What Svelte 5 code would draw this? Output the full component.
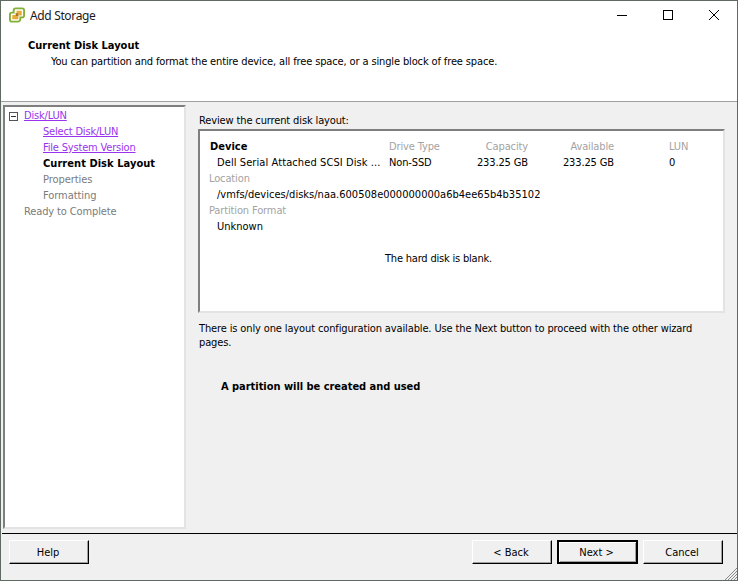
<script>
  const steps = [
    { label: 'Select Disk/LUN', kind: 'link' },
    { label: 'File System Version', kind: 'link' },
    { label: 'Current Disk Layout', kind: 'current' },
    { label: 'Properties', kind: 'off' },
    { label: 'Formatting', kind: 'off' }
  ]
</script>

<div class="window">
  <header class="head">
    <div class="titlebar">
      <svg class="logo" width="16" height="16" viewBox="0 0 17 17">
        <path d="M7 1.500h7a2 2 0 0 1 2 2V9a2 2 0 0 1-2 2h-2v2a2.500 2.500 0 0 1-2.500 2.500H3a2 2 0 0 1-2-2V8a2 2 0 0 1 2-2h2V3.500a2 2 0 0 1 2-2z" fill="#fff" stroke="#84b135" stroke-width="2" />
        <path d="M8 4h5.500v5H10V6.500H8z" fill="#eaa92f" />
        <path d="M3.500 8.500H7V10h3v3H3.500z" fill="#eaa92f" />
        <path d="M7 6.500h3V10H7z" fill="#a8761c" />
      </svg>
      <span class="title">Add Storage</span>
      <div class="controls">
        <svg width="46" height="30" viewBox="0 0 46 30"><path d="M18 14.500h10" stroke="#000" /></svg>
        <svg width="46" height="30" viewBox="0 0 46 30"><rect x="18.500" y="9.500" width="9" height="9" fill="none" stroke="#000" /></svg>
        <svg width="46" height="30" viewBox="0 0 46 30"><path d="M18 9l10 10M28 9L18 19" stroke="#000" fill="none" /></svg>
      </div>
    </div>
    <h1>Current Disk Layout</h1>
    <p class="sub">You can partition and format the entire device, all free space, or a single block of free space.</p>
  </header>

  <div class="main">
    <nav class="steps">
      <div class="root">
        <span class="toggle"></span>
        <span class="link">Disk/LUN</span>
      </div>
      {#each steps as step}
        <div class="step {step.kind}">{step.label}</div>
      {/each}
      <div class="ready">Ready to Complete</div>
    </nav>

    <section class="content">
      <div class="review">Review the current disk layout:</div>
      <div class="layout">
        <div class="cols">
          <span class="device">Device</span>
          <span class="muted type">Drive Type</span>
          <span class="muted num">Capacity</span>
          <span class="muted num">Available</span>
          <span class="muted lun">LUN</span>
        </div>
        <div class="cols">
          <span class="val dell">Dell Serial Attached SCSI Disk ...</span>
          <span class="type">Non-SSD</span>
          <span class="num">233.25 GB</span>
          <span class="num">233.25 GB</span>
          <span class="lun">0</span>
        </div>
        <div class="muted row">Location</div>
        <div class="val path">/vmfs/devices/disks/naa.600508e000000000a6b4ee65b4b35102</div>
        <div class="muted row">Partition Format</div>
        <div class="val">Unknown</div>
        <div class="blank">The hard disk is blank.</div>
      </div>
      <p class="note">There is only one layout configuration available. Use the Next button to proceed with the other wizard pages.</p>
      <p class="created">A partition will be created and used</p>
    </section>
  </div>

  <footer class="foot">
    <button class="btn">Help</button>
    <div class="right">
      <button class="btn">&lt; Back</button>
      <button class="btn default">Next &gt;</button>
      <button class="btn">Cancel</button>
    </div>
  </footer>

  <svg class="grip" width="14" height="14" viewBox="0 0 14 14">
    <path d="M14 2L2 14M14 5L5 14M14 8L8 14M14 11L11 14" stroke="#8a8a8a" fill="none" />
  </svg>
</div>

<style>
  :global(body) {
    margin: 0;
    background: #f0f0f0;
  }

  .window {
    position: relative;
    box-sizing: border-box;
    width: 738px;
    height: 581px;
    display: flex;
    flex-direction: column;
    background: #f0f0f0;
    border: 1px solid #5f6b62;
    font: 11px/16px "DejaVu Sans Condensed", Tahoma, sans-serif;
    letter-spacing: -0.13px;
    color: #000;
    overflow: hidden;
  }

  .head {
    height: 100px;
    flex: none;
    background: #fff;
    border-bottom: 1px solid #a0a0a0;
  }

  .titlebar {
    display: flex;
    align-items: center;
    height: 30px;
    padding-left: 8px;
  }

  .logo {
    margin: 0 5px 2px 0;
  }

  .title {
    margin-bottom: 2px;
    font: 12px "Noto Sans", sans-serif;
    letter-spacing: -0.35px;
    color: #1a1a1a;
  }

  .controls {
    margin-left: auto;
    display: flex;
  }

  .controls svg {
    display: block;
  }

  h1 {
    margin: 7px 0 0 27px;
    font: bold 11px/16px "DejaVu Sans Condensed", Tahoma, sans-serif;
    letter-spacing: 0;
  }

  .sub {
    margin: 0 0 0 50px;
  }

  .main {
    flex: 1;
    display: flex;
    min-height: 0;
    padding: 3px 12px 4px 2px;
    gap: 12px;
  }

  .steps {
    box-sizing: border-box;
    width: 183px;
    flex: none;
    background: #fff;
    border: 2px solid;
    border-color: #7f7f7f #e3e3e3 #e3e3e3 #7f7f7f;
    padding: 1px 0 0 4px;
  }

  .root {
    display: flex;
    align-items: center;
    height: 16px;
    gap: 6px;
  }

  .toggle {
    position: relative;
    box-sizing: border-box;
    width: 9px;
    height: 9px;
    border: 1px solid #555;
  }

  .toggle::after {
    content: '';
    position: absolute;
    left: 1px;
    right: 1px;
    top: 3px;
    height: 1px;
    background: #333;
  }

  .link,
  .step.link {
    color: #9933ee;
    text-decoration: underline;
    letter-spacing: -0.18px;
  }

  .step {
    margin-left: 34px;
  }

  .step.current {
    font-weight: bold;
    letter-spacing: 0.05px;
  }

  .step.off,
  .ready {
    color: #7b7b7b;
    letter-spacing: -0.05px;
  }

  .ready {
    margin-left: 15px;
    letter-spacing: -0.12px;
  }

  .content {
    flex: 1;
    min-width: 0;
    padding-top: 8px;
  }

  .review {
    height: 15px;
    padding-left: 1px;
  }

  .layout {
    box-sizing: border-box;
    height: 184px;
    margin-top: 1px;
    background: #fff;
    border: 2px solid;
    border-color: #7f7f7f #e3e3e3 #e3e3e3 #7f7f7f;
    padding: 8px 0 0 10px;
  }

  .cols {
    display: grid;
    grid-template-columns: 179px 60px 79px 86px 80px;
    height: 16px;
  }

  .device {
    font-weight: bold;
    letter-spacing: 0;
  }

  .val {
    padding-left: 7px;
    letter-spacing: 0;
  }

  .dell {
    letter-spacing: 0.09px;
  }

  .path {
    letter-spacing: 0.02px;
  }

  .muted {
    color: #a3a3a3;
  }

  .row {
    margin-left: -1px;
  }

  .num {
    text-align: right;
  }

  .lun {
    padding-left: 55px;
  }

  .blank {
    margin-top: 16px;
    padding-right: 56px;
    text-align: center;
    letter-spacing: -0.2px;
  }

  .note {
    margin: 9px 28px 0 1px;
    line-height: 14px;
  }

  .created {
    margin: 29px 0 0 23px;
    font-weight: bold;
    letter-spacing: -0.03px;
  }

  .foot {
    height: 47px;
    flex: none;
    box-sizing: border-box;
    border-top: 1px solid #000;
    margin-left: 1px;
    padding: 6px 14px 0 7px;
    display: flex;
    justify-content: space-between;
    align-items: flex-start;
  }

  .right {
    display: flex;
    gap: 5px;
  }

  .btn {
    box-sizing: border-box;
    width: 80px;
    height: 24px;
    padding: 1px 2px 0 0;
    background: #f0f0f0;
    border: 1px solid;
    border-color: #fff #000 #000 #fff;
    box-shadow: inset -1px -1px 0 #a0a0a0;
    font: inherit;
    color: #000;
  }

  .btn.default {
    border: 2px solid;
    border-color: #000;
    width: 81px;
    box-shadow: inset 1px 1px 0 #fff, inset -1px -1px 0 #a0a0a0;
  }

  .grip {
    position: absolute;
    right: 0;
    bottom: 0;
  }
</style>
